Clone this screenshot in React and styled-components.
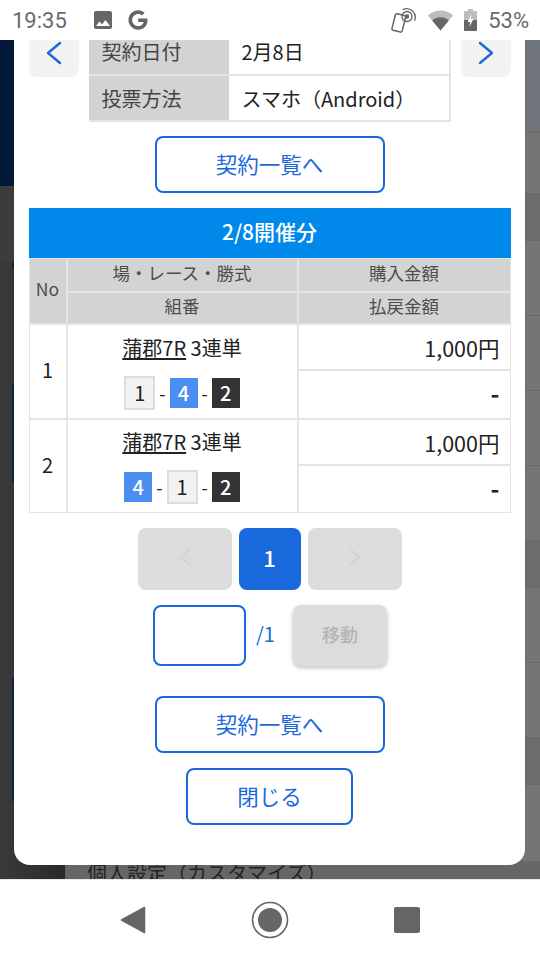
import React from "react";
import styled, { createGlobalStyle } from "styled-components";
import { FaGoogle } from "react-icons/fa";

const BLUE = "#1a69dc";
const FONT = `"Noto Sans CJK JP", "Noto Sans", sans-serif`;

const Global = createGlobalStyle`
  html, body { margin: 0; padding: 0; background: #fff; }
  * { box-sizing: border-box; }
  body { font-family: ${FONT}; }
`;

const Screen = styled.div`
  width: 540px;
  height: 960px;
  display: flex;
  flex-direction: column;
  overflow: hidden;
`;

const StatusBar = styled.header`
  height: 40px;
  flex: none;
  display: flex;
  align-items: center;
  padding: 0 11px 0 12px;
  background: #fff;
  color: #6a6a6a;
  font-family: Roboto, sans-serif;
  font-size: 22px;
`;

const StatusTime = styled.span`
  width: 79px;
`;

const StatusGroup = styled.div`
  display: flex;
  align-items: center;
  gap: ${(p) => p.$gap}px;
  margin-left: ${(p) => (p.$auto ? "auto" : "0")};
`;

const Backdrop = styled.main`
  position: relative;
  flex: none;
  height: 839px;
  display: flex;
  background: #757575;
  overflow: hidden;
`;

const SideColumn = styled.div`
  width: 65px;
  flex: none;
  display: flex;
  flex-direction: column;
  background: linear-gradient(to right, #3a3a3a, #2a2a2a);
`;

const SideBlock = styled.div`
  flex: none;
  height: ${(p) => p.$h}px;
  background: ${(p) => p.$bg};
`;

const SideSliver = styled.div`
  flex: none;
  width: 3px;
  height: ${(p) => p.$h}px;
  margin: ${(p) => p.$top}px 0 0 12px;
  background: #0d2244;
  border-radius: 3px 0 0 3px;
`;

const PageColumn = styled.div`
  flex: 1;
  display: flex;
  flex-direction: column;
`;

const PageBand = styled.div`
  flex: none;
  height: ${(p) => p.$h}px;
  background: ${(p) => p.$bg || "#757575"};
  border-bottom: 1px solid #686868;
`;

const PageFooter = styled.div`
  flex: 1;
  background: #666;
  padding-left: 22px;
  font-size: 20px;
  line-height: 22px;
  color: #222;
  white-space: nowrap;
`;

const Modal = styled.section`
  position: absolute;
  left: 14px;
  top: 0;
  width: 511px;
  height: 825px;
  background: #fff;
  border-radius: 0 0 16px 16px;
  overflow: hidden;
`;

const ModalScroll = styled.div`
  margin-top: -11px;
  display: flex;
  flex-direction: column;
  align-items: center;
`;

const TopRow = styled.div`
  width: 482px;
  display: flex;
  justify-content: space-between;
  align-items: flex-start;
`;

const PagerSquare = styled.button`
  width: 50px;
  height: 48px;
  border: 0;
  padding: 0;
  border-radius: 0 0 8px 8px;
  background: #f2f2f2;
  display: flex;
  align-items: center;
  justify-content: center;
`;

const InfoTable = styled.div`
  width: 362px;
  display: grid;
  grid-template-columns: 140px 1fr;
  border-right: 2px solid #e3e3e3;
  border-bottom: 2px solid #e3e3e3;
`;

const InfoLabel = styled.div`
  height: ${(p) => p.$h}px;
  padding: 0 0 0 13px;
  display: flex;
  align-items: center;
  background: #d3d3d3;
  color: #444;
  font-size: 20px;
  border-bottom: ${(p) => (p.$line ? "2px solid #e3e3e3" : "0")};
`;

const InfoValue = styled.div`
  height: ${(p) => p.$h}px;
  padding: 0 0 0 13px;
  display: flex;
  align-items: center;
  color: #222;
  font-size: 20px;
  border-bottom: ${(p) => (p.$line ? "2px solid #e3e3e3" : "0")};
`;

const OutlineButton = styled.button`
  flex: none;
  width: ${(p) => p.$w}px;
  height: ${(p) => p.$h}px;
  margin-top: ${(p) => p.$top}px;
  border: 2px solid ${BLUE};
  border-radius: 8px;
  background: #fff;
  color: ${BLUE};
  font-family: ${FONT};
  font-size: 21.5px;
  padding: 0 0 3px;
`;

const SectionTitle = styled.h2`
  width: 482px;
  height: 50px;
  margin: 15px 0 0;
  padding-bottom: 5px;
  display: flex;
  align-items: center;
  justify-content: center;
  background: #0088ea;
  color: #fff;
  font-size: 21px;
  font-weight: 500;
`;

const ResultGrid = styled.div`
  width: 482px;
  display: grid;
  grid-template-columns: 36px 229px 1fr;
  grid-template-rows: 32px 30px 44px 47px 44px 46px;
  gap: 2px 2px;
  padding: 1px;
  background: #e4e4e4;
`;

const HeadCell = styled.div`
  grid-row: ${(p) => (p.$span ? "span 2" : "auto")};
  display: flex;
  align-items: center;
  justify-content: center;
  padding-bottom: 5px;
  background: #d3d3d3;
  color: #4d4d4d;
  font-size: 17.5px;
`;

const NoCell = styled.div`
  grid-row: span 2;
  display: flex;
  align-items: center;
  justify-content: center;
  padding-bottom: 4px;
  background: #fff;
  color: #222;
  font-size: 20px;
`;

const RaceCell = styled.div`
  grid-row: span 2;
  display: flex;
  flex-direction: column;
  align-items: center;
  justify-content: center;
  gap: 14px;
  background: #fff;
  color: #222;
  font-size: 20px;
`;

const RaceTitle = styled.div`
  line-height: 28px;
`;

const RaceLink = styled.span`
  text-decoration: underline;
  text-underline-offset: 2px;
`;

const Combo = styled.div`
  display: flex;
  align-items: center;
  gap: 4px;
  font-size: 18px;
  line-height: 1;
`;

const Boat = styled.span`
  width: ${(p) => (p.$tone === "white" ? "31px" : "28px")};
  height: ${(p) => (p.$tone === "white" ? "34px" : "30px")};
  display: flex;
  align-items: center;
  justify-content: center;
  font-size: 20px;
  font-weight: ${(p) => (p.$tone === "white" ? 400 : 500)};
  border: ${(p) => (p.$tone === "white" ? "2px solid #dcdcdc" : "0")};
  background: ${(p) => ({ white: "#f2f2f2", blue: "#4a8ef0", black: "#333" }[p.$tone])};
  color: ${(p) => (p.$tone === "white" ? "#222" : "#fff")};
`;

const AmountCell = styled.div`
  display: flex;
  align-items: center;
  justify-content: flex-end;
  padding: ${(p) => (p.$dash ? "0 10px 4px 0" : "0 10px 0 0")};
  background: #fff;
  color: #222;
  font-size: ${(p) => (p.$dash ? 24 : 21.5)}px;
  font-weight: ${(p) => (p.$dash ? 700 : 400)};
`;

const Pagination = styled.nav`
  display: flex;
  gap: 7px;
  margin-top: 15px;
`;

const PageButton = styled.button`
  width: ${(p) => (p.$active ? 62 : 94)}px;
  height: 62px;
  border: 0;
  border-radius: 8px;
  padding: 0 0 4px;
  background: ${(p) => (p.$active ? BLUE : "#dcdcdc")};
  color: #fff;
  font-family: ${FONT};
  font-size: 22px;
  font-weight: 500;
  display: flex;
  align-items: center;
  justify-content: center;
`;

const JumpRow = styled.div`
  display: flex;
  align-items: center;
  margin-top: 15px;
  margin-left: 1px;
`;

const JumpInput = styled.input`
  width: 93px;
  height: 61px;
  border: 2px solid ${BLUE};
  border-radius: 8px;
  background: #fff;
  outline: 0;
`;

const JumpTotal = styled.span`
  width: 47px;
  padding: 0 0 5px 10px;
  color: ${BLUE};
  font-size: 20px;
`;

const JumpButton = styled.button`
  width: 94px;
  height: 61px;
  border: 0;
  border-radius: 8px;
  padding: 0 0 4px;
  background: #dcdcdc;
  color: #b3b3b3;
  font-family: ${FONT};
  font-size: 18px;
  font-weight: 500;
  box-shadow: 0 2px 4px rgba(0, 0, 0, 0.25);
`;

const NavBar = styled.footer`
  flex: none;
  height: 81px;
  display: flex;
  align-items: center;
  justify-content: center;
  gap: 105px;
  padding-bottom: 1px;
  background: #fff;
  border-top: 1px solid #e8e8e8;
`;

const NavGlyph = styled.svg`
  display: block;
  flex: none;
`;

const Chevron = ({ dir, color = BLUE, size = 26, width = 2.4 }) => (
  <svg width={size} height={size} viewBox="0 0 26 26" fill="none" stroke={color} strokeWidth={width} strokeLinecap="round" strokeLinejoin="round">
    <path d={dir === "left" ? "M19 3 L7 13 L19 23" : "M7 3 L19 13 L7 23"} />
  </svg>
);

const PhoneTapIcon = () => (
  <svg width="27" height="26" viewBox="0 0 27 26" fill="none" stroke="#666">
    <rect x="3.5" y="7.5" width="10.5" height="17" rx="1.6" transform="rotate(14 9 16)" strokeWidth="1.5" />
    <path d="M12.5 2.8a8.6 8.6 0 0 1 12 11" strokeWidth="1.3" />
    <circle cx="17" cy="9.5" r="5" strokeWidth="1.3" />
    <circle cx="17" cy="9.5" r="2.2" fill="#666" stroke="none" />
  </svg>
);

const WifiIcon = () => (
  <svg width="25" height="21" viewBox="0 0 25 21">
    <path d="M0 5.5C3.5 2.3 7.8.5 12.5.5S21.5 2.3 25 5.5L12.5 20.5Z" fill="#bdbdbd" />
    <path d="M4.2 10.5C6.6 8.4 9.4 7.3 12.5 7.3s5.9 1.1 8.3 3.2L12.5 20.5Z" fill="#666" />
  </svg>
);

const BatteryIcon = () => (
  <svg width="13" height="22" viewBox="0 0 13 22">
    <path d="M4 0h5v2h3a1 1 0 0 1 1 1v18a1 1 0 0 1-1 1H1a1 1 0 0 1-1-1V3a1 1 0 0 1 1-1h3Z" fill="#bdbdbd" />
    <path d="M0 11h13v10a1 1 0 0 1-1 1H1a1 1 0 0 1-1-1Z" fill="#666" />
    <path d="M7.6 5 3.6 13h2.6l-.8 5 4-8H6.8Z" fill="#fff" />
  </svg>
);

const ImageIcon = () => (
  <svg width="24" height="24" viewBox="0 0 24 24" fill="#666">
    <path d="M21 19V5c0-1.1-.9-2-2-2H5c-1.1 0-2 .9-2 2v14c0 1.1.9 2 2 2h14c1.1 0 2-.9 2-2zM8.5 13.5l2.5 3.01L14.5 12l4.5 6H5l3.5-4.5z" />
  </svg>
);

const rows = [
  { no: 1, boats: [["white", 1], ["blue", 4], ["black", 2]] },
  { no: 2, boats: [["blue", 4], ["white", 1], ["black", 2]] },
];

const bands = [61, 47, 75, 75, 75, 75, 47, 75, 75, 47, 77];

export default function App() {
  return (
    <Screen>
      <Global />
      <StatusBar>
        <StatusTime>19:35</StatusTime>
        <StatusGroup $gap={13}>
          <ImageIcon />
          <FaGoogle size={20} color="#666" />
        </StatusGroup>
        <StatusGroup $gap={11} $auto>
          <PhoneTapIcon />
          <WifiIcon />
          <BatteryIcon />
          <span>53%</span>
        </StatusGroup>
      </StatusBar>

      <Backdrop>
        <SideColumn>
          <SideBlock $h={146} $bg="#02193a" />
          <SideBlock $h={76} $bg="#3c3c3c" />
          <SideSliver $h={7} $top={0} />
          <SideSliver $h={100} $top={114} />
          <SideSliver $h={125} $top={194} />
        </SideColumn>
        <PageColumn>
          <PageBand $h={93} $bg="#6f737a" />
          {bands.map((h, i) => (
            <PageBand key={i} $h={h} $bg={h === 47 ? "#6c6c6c" : undefined} />
          ))}
          <PageFooter>個人設定（カスタマイズ）</PageFooter>
        </PageColumn>

        <Modal>
          <ModalScroll>
            <TopRow>
              <PagerSquare aria-label="前へ"><Chevron dir="left" /></PagerSquare>
              <InfoTable>
                <InfoLabel $h={47} $line>契約日付</InfoLabel>
                <InfoValue $h={47} $line>2月8日</InfoValue>
                <InfoLabel $h={44}>投票方法</InfoLabel>
                <InfoValue $h={44}>スマホ（Android）</InfoValue>
              </InfoTable>
              <PagerSquare aria-label="次へ"><Chevron dir="right" /></PagerSquare>
            </TopRow>

            <OutlineButton $w={230} $h={57} $top={14}>契約一覧へ</OutlineButton>

            <SectionTitle>2/8開催分</SectionTitle>

            <ResultGrid>
              <HeadCell $span>No</HeadCell>
              <HeadCell>場・レース・勝式</HeadCell>
              <HeadCell>購入金額</HeadCell>
              <HeadCell>組番</HeadCell>
              <HeadCell>払戻金額</HeadCell>
              {rows.map((r) => (
                <React.Fragment key={r.no}>
                  <NoCell>{r.no}</NoCell>
                  <RaceCell>
                    <RaceTitle><RaceLink>蒲郡7R</RaceLink> 3連単</RaceTitle>
                    <Combo>
                      {r.boats.map(([tone, n], i) => (
                        <React.Fragment key={i}>
                          {i > 0 && <span>-</span>}
                          <Boat $tone={tone}>{n}</Boat>
                        </React.Fragment>
                      ))}
                    </Combo>
                  </RaceCell>
                  <AmountCell>1,000円</AmountCell>
                  <AmountCell $dash>-</AmountCell>
                </React.Fragment>
              ))}
            </ResultGrid>

            <Pagination>
              <PageButton aria-label="前"><Chevron dir="left" color="#d0d0d0" size={20} width={1.8} /></PageButton>
              <PageButton $active>1</PageButton>
              <PageButton aria-label="次"><Chevron dir="right" color="#d0d0d0" size={20} width={1.8} /></PageButton>
            </Pagination>

            <JumpRow>
              <JumpInput />
              <JumpTotal>/1</JumpTotal>
              <JumpButton>移動</JumpButton>
            </JumpRow>

            <OutlineButton $w={230} $h={57} $top={30}>契約一覧へ</OutlineButton>
            <OutlineButton $w={167} $h={57} $top={15}>閉じる</OutlineButton>
          </ModalScroll>
        </Modal>
      </Backdrop>

      <NavBar>
        <NavGlyph width="26" height="28" viewBox="0 0 26 28">
          <path d="M24.5 1.5v25L1.5 14Z" fill="#666" stroke="#666" strokeWidth="1.5" strokeLinejoin="round" />
        </NavGlyph>
        <NavGlyph width="38" height="38" viewBox="0 0 38 38">
          <circle cx="19" cy="19" r="17.5" fill="none" stroke="#666" strokeWidth="1.6" />
          <circle cx="19" cy="19" r="12" fill="#666" />
        </NavGlyph>
        <NavGlyph width="26" height="26" viewBox="0 0 26 26">
          <rect width="26" height="26" rx="2" fill="#666" />
        </NavGlyph>
      </NavBar>
    </Screen>
  );
}
